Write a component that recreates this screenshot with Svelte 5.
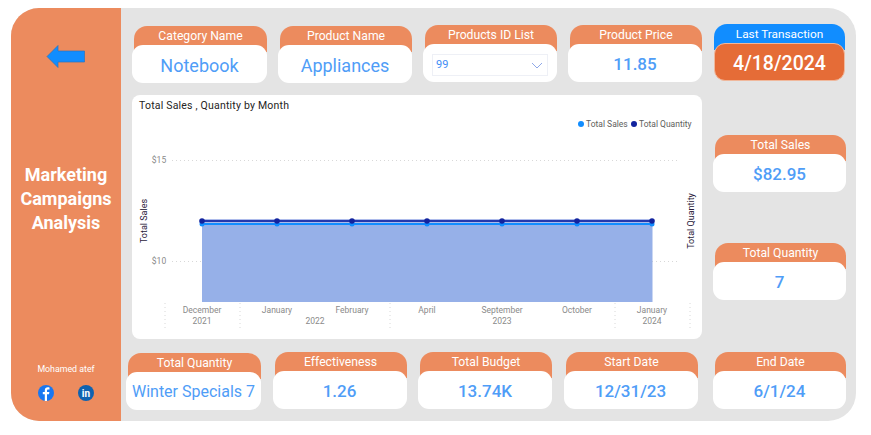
<script>
  const points = [202, 277, 352, 427, 502, 577, 652]
  const months = ["December", "January", "February", "April", "September", "October", "January"]
  const years = [["2021", 202], ["2022", 315], ["2023", 502], ["2024", 652]]
  const ticks = [165, 240, 390, 615, 690]

  const right = [
    { title: "Total Sales", value: "$82.95" },
    { title: "Total Quantity", value: "7" },
    { title: "End Date", value: "6/1/24" }
  ]
  const bottom = [
    { title: "Total Quantity", value: "Winter Specials 7", drop: false },
    { title: "Effectiveness", value: "1.26", drop: true },
    { title: "Total Budget", value: "13.74K", drop: true },
    { title: "Start Date", value: "12/31/23", drop: true }
  ]
</script>

<div class="page">
  <aside class="side">
    <svg class="back" width="40" height="25" viewBox="0 0 40 25">
      <path d="M1 12.5 12 1.5V7H38.500V18H12V23.500Z" fill="#118dff" stroke="#2f74b8" stroke-width="0.7" />
    </svg>
    <h1>Marketing Campaigns Analysis</h1>
    <div class="author">Mohamed atef</div>
    <div class="social">
      <svg width="16" height="16" viewBox="0 0 16 16">
        <circle cx="8" cy="8" r="8" fill="#1877f2" />
        <path d="M9 16V9.300H11L11.400 7H9V5.700C9 5 9.300 4.500 10.300 4.500H11.500V2.500C11 2.400 10.400 2.300 9.800 2.300C8 2.300 6.800 3.400 6.800 5.400V7H4.800V9.300H6.800V16Z" fill="#fff" />
      </svg>
      <svg width="16" height="16" viewBox="0 0 16 16">
        <circle cx="8" cy="8" r="8" fill="#0f62b0" />
        <text x="8" y="11.500" text-anchor="middle" class="in">in</text>
      </svg>
    </div>
  </aside>

  <main class="main">
    <div class="center">
      <div class="row top">
        <div class="card low wide">
          <div class="head">Category Name</div>
          <div class="val big">Notebook</div>
        </div>
        <div class="card low">
          <div class="head">Product Name</div>
          <div class="val big">Appliances</div>
        </div>
        <div class="card">
          <div class="head">Products ID List</div>
          <div class="val">
            <div class="select">
              <span>99</span>
              <svg width="12" height="7" viewBox="0 0 12 7">
                <path d="M1 1 6 6 11 1" fill="none" stroke="#8fa8e8" stroke-width="1" />
              </svg>
            </div>
          </div>
        </div>
        <div class="card">
          <div class="head">Product Price</div>
          <div class="val">11.85</div>
        </div>
      </div>

      <section class="chart">
        <svg width="570" height="244" viewBox="132 95 570 244">
          <text x="139" y="108.500" class="title">Total Sales , Quantity by Month</text>

          <circle cx="581" cy="124" r="3" fill="#118dff" />
          <text x="586" y="127" class="legend">Total Sales</text>
          <circle cx="634" cy="124" r="3" fill="#12239e" />
          <text x="639" y="127" class="legend">Total Quantity</text>

          <text x="159" y="162.500" text-anchor="middle" class="axis">$15</text>
          <text x="159" y="264" text-anchor="middle" class="axis">$10</text>
          <line x1="172" x2="680" y1="160.500" y2="160.500" class="grid" />
          <line x1="172" x2="680" y1="261.500" y2="261.500" class="grid" />

          <text transform="translate(147 221) rotate(-90)" text-anchor="middle" class="axis-title">Total Sales</text>
          <text transform="translate(694 221) rotate(-90)" text-anchor="middle" class="axis-title">Total Quantity</text>

          <rect x="202" y="224" width="450.500" height="78" fill="#96b0e8" />
          <line x1="202" x2="652" y1="224" y2="224" stroke="#118dff" stroke-width="2" />
          {#each points as x}
            <circle cx={x} cy="224" r="2.500" fill="#118dff" />
          {/each}
          <line x1="202" x2="652" y1="221" y2="221" stroke="#5c78d8" stroke-width="3" />
          <line x1="202" x2="652" y1="221" y2="221" stroke="#12239e" stroke-width="1.500" />
          {#each points as x}
            <circle cx={x} cy="221" r="2.800" fill="#12239e" />
          {/each}

          {#each points as x, i}
            <text {x} y="313" text-anchor="middle" class="axis">{months[i]}</text>
          {/each}
          {#each years as [label, x]}
            <text {x} y="324" text-anchor="middle" class="axis">{label}</text>
          {/each}
          {#each ticks as x}
            <line x1={x} x2={x} y1="303" y2="328" class="grid" />
          {/each}
        </svg>
      </section>

      <div class="row bottom">
        {#each bottom as card}
          <div class="card" class:low={!card.drop} class:wide={!card.drop}>
            <div class="head">{card.title}</div>
            <div class="val" class:long={!card.drop}>{card.value}</div>
          </div>
        {/each}
      </div>
    </div>

    <div class="right">
      <div class="card last">
        <div class="head">Last Transaction</div>
        <div class="val">4/18/2024</div>
      </div>
      {#each right as card, i}
        <div class="card" class:sales={i === 0}>
          <div class="head">{card.title}</div>
          <div class="val">{card.value}</div>
        </div>
      {/each}
    </div>
  </main>
</div>

<style>
  :global(body) {
    margin: 0;
    background: #fff;
  }

  .page {
    display: flex;
    width: 845px;
    height: 413px;
    margin: 8px 0 0 11px;
    border-radius: 28px;
    overflow: hidden;
    background: #e4e4e4;
    font-family: Roboto, "Noto Sans", sans-serif;
  }

  .side {
    width: 110px;
    flex: none;
    display: flex;
    flex-direction: column;
    align-items: center;
    background: #ec8b5e;
    color: #fff;
  }

  .back {
    margin: 36px 0 0 0;
  }

  h1 {
    margin: 94px 0 0;
    width: 100px;
    font-size: 18px;
    line-height: 24px;
    font-weight: 700;
    text-align: center;
  }

  .author {
    margin-top: 128px;
    font-size: 8.800px;
    line-height: 12px;
  }

  .social {
    display: flex;
    gap: 24px;
    margin-top: 10px;
  }

  .in {
    font: 700 10px Roboto, sans-serif;
    fill: #fff;
  }

  .main {
    display: flex;
    flex: 1;
    gap: 12px;
    padding-left: 11px;
  }

  .center {
    width: 570px;
    padding-top: 17px;
  }

  .row {
    display: flex;
  }

  .top {
    gap: 11px;
  }

  .bottom {
    gap: 11.500px;
    margin: 13px 0 0 -6px;
  }

  .card {
    width: 132px;
    height: 58px;
    padding-left: 2px;
    display: flex;
    flex-direction: column;
  }

  .card.low {
    margin-top: 1px;
  }

  .card.wide {
    width: 133px;
  }

  .head {
    height: 26px;
    flex: none;
    border-radius: 13px 13px 0 0;
    background: #ec8b5e;
    color: #fff;
    font-size: 12.200px;
    line-height: 21px;
    text-align: center;
  }

  .val {
    height: 38px;
    flex: none;
    margin: -7px 0 0 -2px;
    border-radius: 11px;
    background: #fff;
    color: #4f9df7;
    font-size: 17px;
    font-weight: 500;
    line-height: 40px;
    text-align: center;
    white-space: nowrap;
  }

  .val.big {
    font-size: 18px;
    font-weight: 400;
    line-height: 41px;
  }

  .val.long {
    font-size: 16px;
    font-weight: 400;
  }

  .select {
    display: flex;
    align-items: center;
    justify-content: space-between;
    box-sizing: border-box;
    height: 22px;
    margin: 10px 9px 0;
    padding: 0 4px 0 3px;
    border: 1px solid #eef0f6;
    color: #3f8ef5;
    font-size: 11px;
    font-weight: 400;
    line-height: 20px;
  }

  .chart {
    width: 570px;
    height: 244px;
    margin-top: 11px;
    border-radius: 8px;
    background: #fff;
    overflow: hidden;
  }

  .chart svg {
    display: block;
  }

  .title {
    font: 400 10.500px Roboto, sans-serif;
    letter-spacing: 0.2px;
    fill: #252423;
  }

  .legend {
    font: 400 8.500px Roboto, sans-serif;
    fill: #605e5c;
  }

  .axis {
    font: 400 8.500px Roboto, sans-serif;
    fill: #8a8a8a;
  }

  .axis-title {
    font: 400 9px Roboto, sans-serif;
    fill: #2a1a3a;
  }

  .grid {
    stroke: #d8d8d8;
    stroke-width: 1;
    stroke-dasharray: 1 3;
  }

  .right {
    width: 133px;
    margin-left: -1px;
    padding-top: 16px;
    height: 386px;
    display: flex;
    flex-direction: column;
    justify-content: space-between;
  }

  .right .card {
    width: 131px;
    padding-left: 2px;
  }

  .right .head {
    line-height: 21px;
  }

  .right .card.sales {
    margin-top: 2px;
  }

  .right .card.last {
    padding-left: 1px;
    width: 131px;
  }

  .last .head {
    background: #118dff;
    font-size: 11.800px;
  }

  .last .val {
    margin-left: 0;
    box-sizing: border-box;
    border: 1px solid #f0b89c;
    background: #e56c37;
    color: #fff;
    font-size: 19.500px;
    line-height: 39px;
    font-weight: 500;
  }
</style>
